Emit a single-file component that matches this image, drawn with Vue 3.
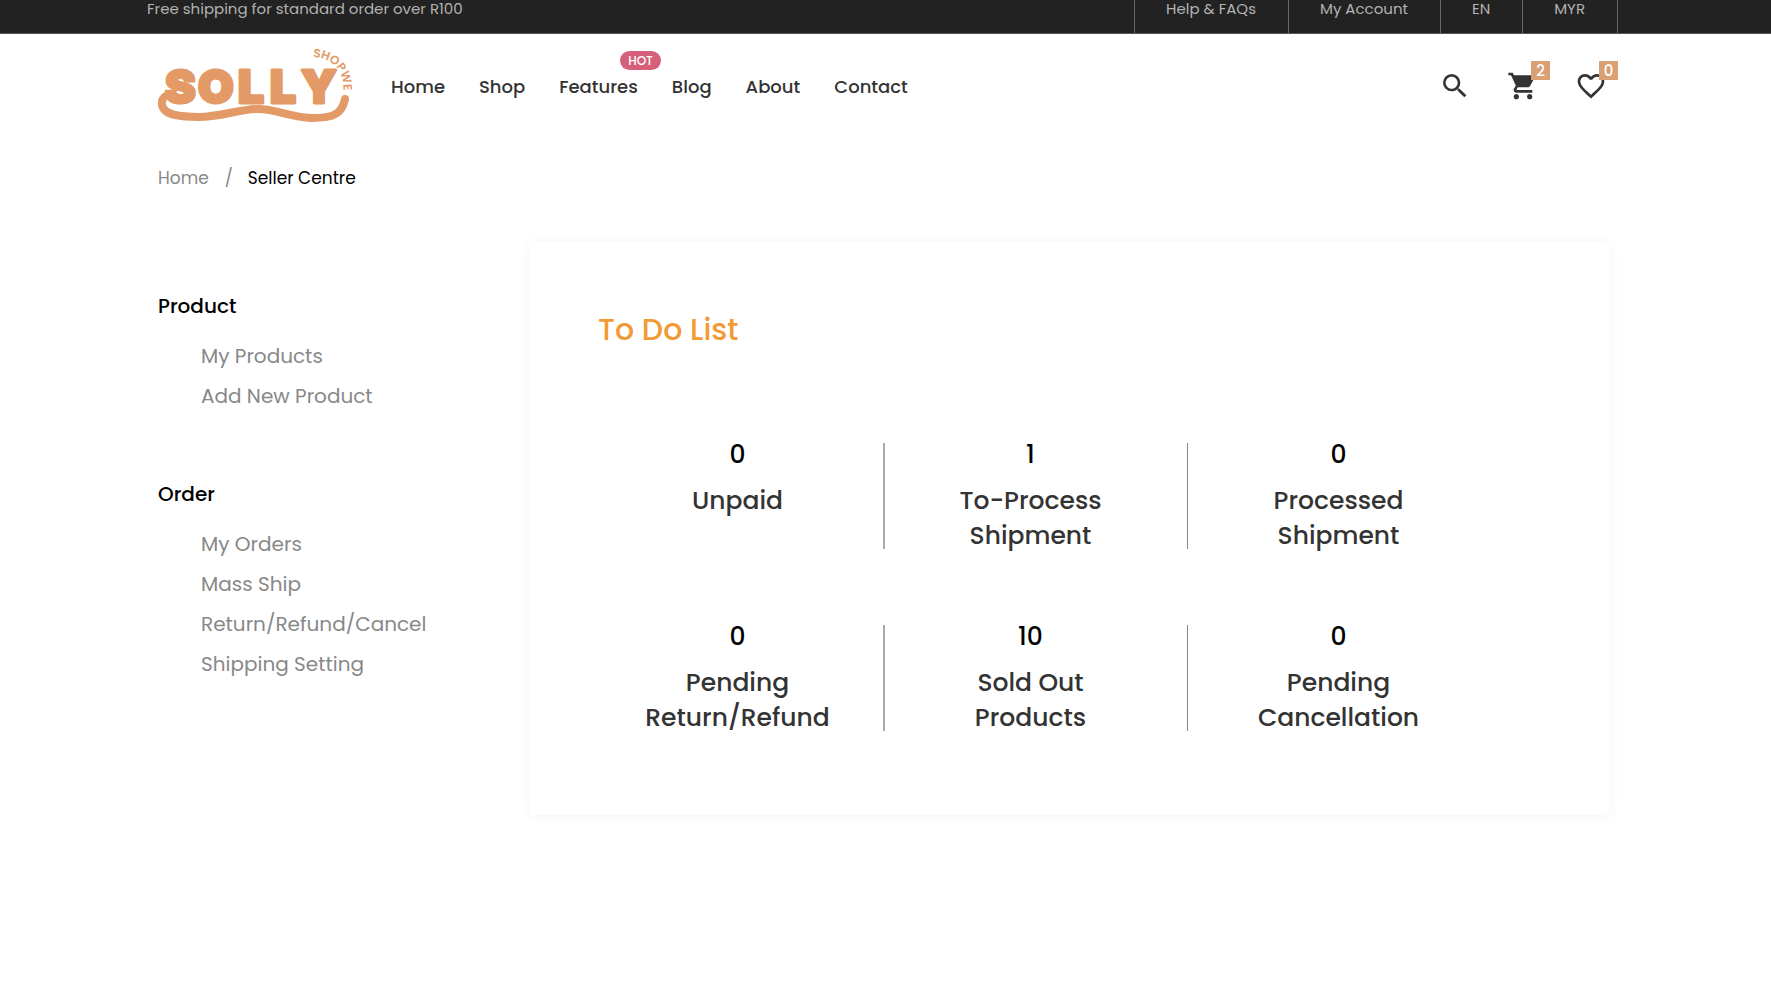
<script setup>
const topLinks = ['Help & FAQs', 'My Account', 'EN', 'MYR']
const navLinks = [
  { label: 'Home' },
  { label: 'Shop' },
  { label: 'Features', tag: 'HOT' },
  { label: 'Blog' },
  { label: 'About' },
  { label: 'Contact' },
]
const groups = [
  { title: 'Product', links: ['My Products', 'Add New Product'] },
  { title: 'Order', links: ['My Orders', 'Mass Ship', 'Return/Refund/Cancel', 'Shipping Setting'] },
]
const todos = [
  { count: 0, lines: ['Unpaid'] },
  { count: 1, lines: ['To-Process', 'Shipment'] },
  { count: 0, lines: ['Processed', 'Shipment'] },
  { count: 0, lines: ['Pending', 'Return/Refund'] },
  { count: 10, lines: ['Sold Out', 'Products'] },
  { count: 0, lines: ['Pending', 'Cancellation'] },
]
</script>

<template>
  <div class="page">
    <div class="topbar">
      <span>Free shipping for standard order over R100</span>
      <nav class="toplinks" aria-label="Account">
        <a v-for="t in topLinks" :key="t" href="#">{{ t }}</a>
      </nav>
    </div>

    <header class="header">
      <a href="#" class="logo" aria-label="Solly Shopwe">
        <svg width="198" height="84" viewBox="0 0 198 84">
          <defs>
            <path id="arc" d="M155 12 C174 13 189 24 185 56" />
          </defs>
          <text class="word" x="7 40 80 112 143" y="58">SOLLY</text>
          <text class="arcword"><textPath href="#arc">SHOPWE</textPath></text>
          <path class="swoosh" d="M14 51 C7 49 3 54 4 60 C6 71 25 72 41 72 C62 72 82 64 100 64 C118 64 135 73 155 73 C175 73 184 69 187 54" />
        </svg>
      </a>
      <nav class="nav" aria-label="Main">
        <a v-for="n in navLinks" :key="n.label" href="#">{{ n.label }}<span v-if="n.tag" class="tag">{{ n.tag }}</span></a>
      </nav>
      <div class="tools">
        <button type="button" aria-label="Search">
          <svg viewBox="0 0 24 24"><path d="M15.5 14h-.79l-.28-.27A6.47 6.47 0 0 0 16 9.5 6.5 6.5 0 1 0 9.5 16c1.61 0 3.09-.59 4.23-1.57l.27.28v.79l5 4.99L20.49 19l-4.99-5zm-6 0C7.01 14 5 11.99 5 9.5S7.01 5 9.5 5 14 7.01 14 9.5 11.99 14 9.5 14z" /></svg>
        </button>
        <button type="button" aria-label="Cart">
          <svg viewBox="0 0 24 24"><path d="M7 18c-1.1 0-1.99.9-1.99 2S5.9 22 7 22s2-.9 2-2-.9-2-2-2zM1 2v2h2l3.6 7.59-1.35 2.45c-.16.28-.25.61-.25.96 0 1.1.9 2 2 2h12v-2H7.42c-.14 0-.25-.11-.25-.25l.03-.12.9-1.63h7.45c.75 0 1.41-.41 1.75-1.03l3.58-6.49A1.003 1.003 0 0 0 20 4H5.21l-.94-2H1zm16 16c-1.1 0-1.99.9-1.99 2s.89 2 1.99 2 2-.9 2-2-.9-2-2-2z" /></svg>
          <span class="count">2</span>
        </button>
        <button type="button" aria-label="Wishlist">
          <svg viewBox="0 0 24 24"><path d="M16.5 3c-1.74 0-3.41.81-4.5 2.09C10.91 3.81 9.24 3 7.5 3 4.42 3 2 5.42 2 8.5c0 3.78 3.4 6.86 8.55 11.54L12 21.35l1.45-1.32C18.6 15.36 22 12.28 22 8.5 22 5.42 19.58 3 16.5 3zm-4.4 15.55l-.1.1-.1-.1C7.14 14.24 4 11.39 4 8.5 4 6.5 5.5 5 7.5 5c1.54 0 3.04.99 3.57 2.36h1.87C13.46 5.99 14.96 5 16.5 5c2 0 3.5 1.5 3.5 3.5 0 2.89-3.14 5.74-7.9 10.05z" /></svg>
          <span class="count">0</span>
        </button>
      </div>
    </header>

    <nav class="crumbs" aria-label="Breadcrumb">
      <a href="#">Home</a><span class="slash">/</span><span class="here">Seller Centre</span>
    </nav>

    <div class="body">
      <aside class="side">
        <section v-for="g in groups" :key="g.title">
          <h2>{{ g.title }}</h2>
          <ul>
            <li v-for="l in g.links" :key="l"><a href="#">{{ l }}</a></li>
          </ul>
        </section>
      </aside>
      <main class="card">
        <h1>To Do List</h1>
        <div class="grid">
          <a v-for="(t, i) in todos" :key="i" href="#" class="cell">
            <strong>{{ t.count }}</strong>
            <span v-for="l in t.lines" :key="l">{{ l }}</span>
          </a>
        </div>
      </main>
    </div>
  </div>
</template>

<style>
body {
  margin: 0;
  background: #fff;
}
</style>

<style scoped>
.page {
  box-sizing: border-box;
  min-height: 100vh;
  padding-bottom: 60px;
  font-family: Poppins, Inter, "Liberation Sans", sans-serif;
  color: #333;
}
a {
  color: inherit;
  text-decoration: none;
}
.topbar {
  display: flex;
  justify-content: space-between;
  padding: 0 153px 0 147px;
  background: #222;
  border-bottom: 1px solid #5a5556;
  color: #b2b2b2;
  font-size: 15px;
  line-height: 17px;
}
.toplinks {
  display: flex;
  border-left: 1px solid #6a6a6a;
}
.toplinks a {
  padding: 0 32px 16px 31px;
  border-right: 1px solid #6a6a6a;
}
.header {
  display: flex;
  align-items: center;
  height: 106px;
  padding: 0 164px 0 158px;
}
.logo svg {
  display: block;
}
.logo {
  margin-right: 35px;
}
.word {
  font-family: Inter, sans-serif;
  font-weight: 900;
  font-size: 46px;
  fill: #e39a66;
  stroke: #e39a66;
  stroke-width: 3;
  stroke-linejoin: round;
}
.arcword {
  font-family: Poppins, Inter, sans-serif;
  font-weight: 600;
  font-size: 12px;
  fill: #e39a66;
}
.swoosh {
  fill: none;
  stroke: #e39a66;
  stroke-width: 8;
  stroke-linecap: round;
}
.nav {
  display: flex;
  gap: 34px;
  font-size: 18px;
  font-weight: 500;
  line-height: 24px;
}
.nav a {
  position: relative;
}
.tag {
  position: absolute;
  top: -24px;
  left: 61px;
  padding: 0 8px;
  border-radius: 10px;
  background: #d5607a;
  color: #fff;
  font-size: 12px;
  line-height: 19px;
}
.tools {
  display: flex;
  gap: 36px;
  margin: 0 0 2px auto;
}
.tools button {
  position: relative;
  padding: 0;
  border: 0;
  background: none;
  font: inherit;
}
.tools svg {
  display: block;
  width: 32px;
  height: 32px;
  fill: #333;
}
.count {
  position: absolute;
  top: -9px;
  left: 24px;
  width: 19px;
  background: #d9a074;
  color: #fff;
  font-size: 15px;
  font-weight: 500;
  line-height: 19px;
  text-align: center;
}
.crumbs {
  display: flex;
  padding: 26px 158px 0;
  font-size: 17px;
  line-height: 24px;
  color: #888;
}
.slash {
  margin: 0 15px 0 16px;
}
.here {
  color: #000;
}
.body {
  display: flex;
  padding: 52px 162px 0 158px;
}
.side {
  flex: none;
  width: 372px;
  padding-top: 44px;
  font-size: 20px;
  line-height: 40px;
  color: #888;
}
.side section {
  margin-bottom: 58px;
}
.side h2 {
  margin: 0 0 10px;
  font-size: 20px;
  font-weight: 500;
  color: #000;
}
.side ul {
  margin: 0;
  padding: 0 0 0 43px;
  list-style: none;
}
.card {
  flex: 1;
  align-self: flex-start;
  padding: 68px 120px 84px 62px;
  border-radius: 4px;
  background: #fff;
  box-shadow: 0 1px 14px rgba(0, 0, 0, 0.05);
}
.card h1 {
  margin: 0 0 93px 6px;
  font-size: 30px;
  font-weight: 500;
  line-height: 40px;
  color: #f29a36;
}
.grid {
  display: grid;
  grid-template-columns: 293fr 303fr 301fr;
  row-gap: 76px;
}
.cell {
  display: flex;
  flex-direction: column;
  align-items: center;
  box-sizing: border-box;
  height: 106px;
  font-size: 25px;
  font-weight: 500;
  line-height: 35px;
}
.cell:nth-child(3n + 1) {
  border-right: 2px solid #aaa;
}
.cell:nth-child(3n + 2) {
  padding-right: 11px;
  border-right: 1px solid #888;
}
.cell strong {
  margin-bottom: 16px;
  font-weight: 500;
  line-height: 24px;
  color: #000;
}
</style>
